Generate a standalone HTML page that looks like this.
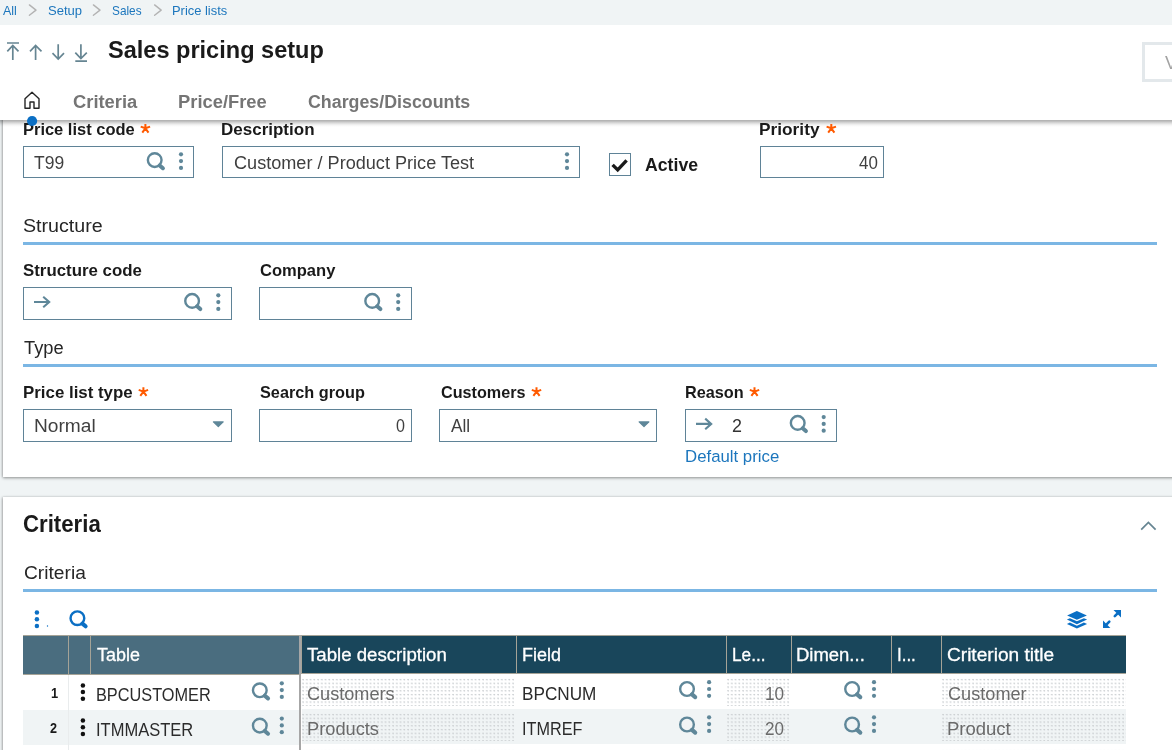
<!DOCTYPE html>
<html>
<head>
<meta charset="utf-8">
<title>Sales pricing setup</title>
<style>
*{box-sizing:border-box;margin:0;padding:0}
html,body{width:1172px;height:750px;overflow:hidden}
body{background:#f0f4f5;font-family:"Liberation Sans",sans-serif;position:relative;color:#1a1a1a}
.abs{position:absolute}
.t{position:absolute;white-space:pre;line-height:1;transform-origin:0 0}
.panel{position:absolute;background:#fff;box-shadow:0 1px 3px rgba(0,0,0,.38),-1px 0 2px rgba(0,0,0,.12)}
.line{position:absolute;height:3px;background:#7bb6e4}
.box{position:absolute;height:32px;border:1px solid #5f8397;background:#fff}
svg{position:absolute;overflow:visible}
.th{position:absolute;background:#19465b;border-left:1px solid #a5a397}
.th.fz{background:#4a6d7f}
.dot{position:absolute;height:28px;background-image:radial-gradient(circle at 1.1px 1.6px,#c9cdd0 .55px,transparent 1.05px);background-size:3.75px 3.75px}
</style>
</head>
<body>
<!-- panels -->
<div class="panel" style="left:3px;top:100px;width:1180px;height:376.8px"></div>
<div class="panel" style="left:3px;top:497.2px;width:1180px;height:300px"></div>

<!-- breadcrumb + header -->
<div class="abs" style="left:0;top:0;width:1172px;height:25px;background:#f0f4f5"></div>
<div class="abs" style="left:0;top:25px;width:1172px;height:95px;background:#fff"></div>
<div class="abs" style="left:0;top:120px;width:1172px;height:7px;background:linear-gradient(to bottom,rgba(0,0,0,.31) 0,rgba(0,0,0,.28) 1px,rgba(0,0,0,.14) 3px,rgba(0,0,0,.045) 5px,rgba(0,0,0,0) 7px)"></div>
<div class="abs" style="left:1142px;top:42px;width:40px;height:40px;border:3px solid #e3e8eb;background:#fff"></div>

<!-- form boxes -->
<div class="box" style="left:23px;top:146px;width:171px"></div>
<div class="box" style="left:222px;top:146px;width:358px"></div>
<div class="abs" style="left:609px;top:153px;width:22px;height:23px;border:1px solid #5f8397;background:#fff"></div>
<div class="box" style="left:760px;top:146px;width:124px"></div>
<div class="line" style="left:23px;top:242px;width:1134px"></div>
<div class="box" style="left:23px;top:287px;width:209px;height:33px"></div>
<div class="box" style="left:259px;top:287px;width:153px;height:33px"></div>
<div class="line" style="left:23px;top:364px;width:1134px"></div>
<div class="box" style="left:23px;top:409px;width:209px;height:33px"></div>
<div class="box" style="left:259px;top:409px;width:153px;height:33px"></div>
<div class="box" style="left:439px;top:409px;width:218px;height:33px"></div>
<div class="box" style="left:685px;top:409px;width:152px;height:33px"></div>
<div class="line" style="left:23px;top:589px;width:1134px"></div>

<!-- table backgrounds -->
<div class="abs" style="left:23px;top:710.1px;width:275.6px;height:34.8px;background:#f0f4f5"></div>
<div class="abs" style="left:301.6px;top:709.2px;width:824.2px;height:34.6px;background:#f0f4f5"></div>
<div class="abs" style="left:68px;top:674px;width:1px;height:80px;background:#e9eced"></div>
<div class="abs" style="left:23px;top:635.2px;width:275.7px;height:39.4px;background:#a5a397"></div>
<div class="abs" style="left:301.1px;top:635.2px;width:824.7px;height:38.7px;background:#a5a397"></div>
<div class="th fz" style="left:23px;top:636.2px;width:45px;height:37.4px;border-left:0"></div>
<div class="th fz" style="left:68px;top:636.2px;width:22.3px;height:37.4px"></div>
<div class="th fz" style="left:90.3px;top:636.2px;width:208.4px;height:37.4px"></div>
<div class="th" style="left:302px;top:636.2px;width:214px;height:36.6px;border-left:0"></div>
<div class="th" style="left:516px;top:636.2px;width:210px;height:36.6px"></div>
<div class="th" style="left:726px;top:636.2px;width:65px;height:36.6px"></div>
<div class="th" style="left:791px;top:636.2px;width:100px;height:36.6px"></div>
<div class="th" style="left:891px;top:636.2px;width:50px;height:36.6px"></div>
<div class="th" style="left:941px;top:636.2px;width:184.8px;height:36.6px"></div>
<div class="abs" style="left:299.2px;top:635.2px;width:2px;height:120px;background:#a6a6a6"></div>
<div class="dot" style="left:302px;top:677.7px;width:211.6px"></div>
<div class="dot" style="left:302px;top:713.3px;width:211.6px"></div>
<div class="dot" style="left:302px;top:748.9px;width:211.6px"></div>
<div class="dot" style="left:727px;top:677.7px;width:61.6px"></div>
<div class="dot" style="left:727px;top:713.3px;width:61.6px"></div>
<div class="dot" style="left:727px;top:748.9px;width:61.6px"></div>
<div class="dot" style="left:942px;top:677.7px;width:183.8px"></div>
<div class="dot" style="left:942px;top:713.3px;width:183.8px"></div>
<div class="dot" style="left:942px;top:748.9px;width:183.8px"></div>

<!-- text -->
<div class="abs" style="left:0;top:0;width:1172px;height:750px;will-change:transform">
<span class="t" style="left:3.00px;top:4px;font-size:13px;font-weight:400;color:#1c76bd;transform:scaleX(0.9616)">All</span>
<span class="t" style="left:47.70px;top:4px;font-size:13px;font-weight:400;color:#1c76bd;transform:scaleX(1.0017)">Setup</span>
<span class="t" style="left:112.00px;top:4px;font-size:13px;font-weight:400;color:#1c76bd;transform:scaleX(0.9086)">Sales</span>
<span class="t" style="left:172.01px;top:4px;font-size:13px;font-weight:400;color:#1c76bd;transform:scaleX(0.9924)">Price lists</span>
<span class="t" style="left:108.20px;top:38px;font-size:24.3px;font-weight:700;color:#1a1a1a;transform:scaleX(0.9687)">Sales pricing setup</span>
<span class="t" style="left:72.90px;top:94px;font-size:17.5px;font-weight:700;color:#757575;transform:scaleX(1.0480)">Criteria</span>
<span class="t" style="left:177.65px;top:94px;font-size:17.5px;font-weight:700;color:#757575;transform:scaleX(1.0488)">Price/Free</span>
<span class="t" style="left:307.50px;top:94px;font-size:17.5px;font-weight:700;color:#757575;transform:scaleX(1.0172)">Charges/Discounts</span>
<span class="t" style="left:1164.70px;top:55px;font-size:17.5px;font-weight:400;color:#a3a3a3;transform:scaleX(1.0400)">V</span>
<span class="t" style="left:22.89px;top:121px;font-size:16.25px;font-weight:700;color:#1a1a1a;transform:scaleX(1.0133)">Price list code</span>
<span class="t" style="left:221.45px;top:121px;font-size:16.25px;font-weight:700;color:#1a1a1a;transform:scaleX(1.0461)">Description</span>
<span class="t" style="left:759.44px;top:121px;font-size:16.25px;font-weight:700;color:#1a1a1a;transform:scaleX(1.0635)">Priority</span>
<span class="t" style="left:34.30px;top:155px;font-size:17.5px;font-weight:400;color:#3f3f3f;transform:scaleX(0.9992)">T99</span>
<span class="t" style="left:234.00px;top:155px;font-size:17.5px;font-weight:400;color:#3f3f3f;transform:scaleX(1.0345)">Customer / Product Price Test</span>
<span class="t" style="left:858.50px;top:155px;font-size:17.5px;font-weight:400;color:#3f3f3f;transform:scaleX(0.9679)">40</span>
<span class="t" style="left:644.70px;top:157px;font-size:17.5px;font-weight:700;color:#1a1a1a;transform:scaleX(1.0096)">Active</span>
<span class="t" style="left:23.30px;top:218px;font-size:17.5px;font-weight:400;color:#262626;transform:scaleX(1.1229)">Structure</span>
<span class="t" style="left:23.30px;top:262px;font-size:16.25px;font-weight:700;color:#1a1a1a;transform:scaleX(1.0363)">Structure code</span>
<span class="t" style="left:259.90px;top:262px;font-size:16.25px;font-weight:700;color:#1a1a1a;transform:scaleX(1.0176)">Company</span>
<span class="t" style="left:23.90px;top:340px;font-size:17.5px;font-weight:400;color:#262626;transform:scaleX(1.0455)">Type</span>
<span class="t" style="left:22.86px;top:384px;font-size:16.25px;font-weight:700;color:#1a1a1a;transform:scaleX(1.0379)">Price list type</span>
<span class="t" style="left:260.00px;top:384px;font-size:16.25px;font-weight:700;color:#1a1a1a;transform:scaleX(1.0008)">Search group</span>
<span class="t" style="left:440.70px;top:384px;font-size:16.25px;font-weight:700;color:#1a1a1a;transform:scaleX(0.9959)">Customers</span>
<span class="t" style="left:684.90px;top:384px;font-size:16.25px;font-weight:700;color:#1a1a1a;transform:scaleX(1.0005)">Reason</span>
<span class="t" style="left:33.91px;top:418px;font-size:17.5px;font-weight:400;color:#3f3f3f;transform:scaleX(1.0934)">Normal</span>
<span class="t" style="left:395.90px;top:418px;font-size:17.5px;font-weight:400;color:#3f3f3f;transform:scaleX(0.9200)">0</span>
<span class="t" style="left:450.90px;top:418px;font-size:17.5px;font-weight:400;color:#3f3f3f;transform:scaleX(0.9860)">All</span>
<span class="t" style="left:731.50px;top:418px;font-size:17.5px;font-weight:400;color:#333;transform:scaleX(1.0222)">2</span>
<span class="t" style="left:684.77px;top:448px;font-size:16.25px;font-weight:400;color:#1c76bd;transform:scaleX(1.0334)">Default price</span>
<span class="t" style="left:23.30px;top:513px;font-size:23.6px;font-weight:700;color:#1a1a1a;transform:scaleX(0.9414)">Criteria</span>
<span class="t" style="left:23.50px;top:565px;font-size:17.5px;font-weight:400;color:#262626;transform:scaleX(1.0959)">Criteria</span>
<span class="t" style="left:96.90px;top:647px;font-size:17.5px;font-weight:400;color:#fff;transform:scaleX(1.0242);-webkit-text-stroke:.3px #fff;">Table</span>
<span class="t" style="left:307.00px;top:647px;font-size:17.5px;font-weight:400;color:#fff;transform:scaleX(1.0644);-webkit-text-stroke:.3px #fff;">Table description</span>
<span class="t" style="left:521.77px;top:647px;font-size:17.5px;font-weight:400;color:#fff;transform:scaleX(1.0277);-webkit-text-stroke:.3px #fff;">Field</span>
<span class="t" style="left:731.72px;top:647px;font-size:17.5px;font-weight:400;color:#fff;transform:scaleX(0.9848);-webkit-text-stroke:.3px #fff;">Le...</span>
<span class="t" style="left:796.34px;top:647px;font-size:17.5px;font-weight:400;color:#fff;transform:scaleX(1.0554);-webkit-text-stroke:.3px #fff;">Dimen...</span>
<span class="t" style="left:897.03px;top:647px;font-size:17.5px;font-weight:400;color:#fff;transform:scaleX(0.9667);-webkit-text-stroke:.3px #fff;">I...</span>
<span class="t" style="left:947.40px;top:647px;font-size:17.5px;font-weight:400;color:#fff;transform:scaleX(1.0904);-webkit-text-stroke:.3px #fff;">Criterion title</span>
<span class="t" style="left:51.20px;top:686px;font-size:14px;font-weight:700;color:#1a1a1a;transform:scaleX(0.9200)">1</span>
<span class="t" style="left:50.40px;top:721px;font-size:14px;font-weight:700;color:#1a1a1a;transform:scaleX(0.9000)">2</span>
<span class="t" style="left:96.27px;top:687px;font-size:17.5px;font-weight:400;color:#2b2b2b;transform:scaleX(0.9315)">BPCUSTOMER</span>
<span class="t" style="left:96.26px;top:722px;font-size:17.5px;font-weight:400;color:#2b2b2b;transform:scaleX(0.9437)">ITMMASTER</span>
<span class="t" style="left:307.00px;top:686px;font-size:17.5px;font-weight:400;color:#6a6a6a;transform:scaleX(1.0359)">Customers</span>
<span class="t" style="left:306.76px;top:721px;font-size:17.5px;font-weight:400;color:#6a6a6a;transform:scaleX(1.0423)">Products</span>
<span class="t" style="left:522.22px;top:686px;font-size:17.5px;font-weight:400;color:#2b2b2b;transform:scaleX(0.9804)">BPCNUM</span>
<span class="t" style="left:522.27px;top:721px;font-size:17.5px;font-weight:400;color:#2b2b2b;transform:scaleX(0.9269)">ITMREF</span>
<span class="t" style="left:765.22px;top:686px;font-size:17.5px;font-weight:400;color:#6a6a6a;transform:scaleX(0.9822)">10</span>
<span class="t" style="left:765.40px;top:721px;font-size:17.5px;font-weight:400;color:#6a6a6a;transform:scaleX(0.9730)">20</span>
<span class="t" style="left:947.60px;top:686px;font-size:17.5px;font-weight:400;color:#6a6a6a;transform:scaleX(1.0365)">Customer</span>
<span class="t" style="left:946.84px;top:721px;font-size:17.5px;font-weight:400;color:#6a6a6a;transform:scaleX(1.0564)">Product</span>
</div>

<!-- icons -->
<svg style="left:0;top:0" width="1172" height="750">
  <defs>
    <g id="sr" fill="none" stroke="currentColor" stroke-linecap="round"><circle cx="0" cy="0" r="6.85" stroke-width="2.4"/><path d="M5 5.4L8.2 8.1" stroke-width="4.1"/></g>
    <g id="d3" fill="currentColor" stroke="none"><circle cx="0" cy="-6.8" r="2.1"/><circle cx="0" cy="0" r="2.1"/><circle cx="0" cy="6.8" r="2.1"/></g>
    <g id="d3b" fill="currentColor" stroke="none"><circle cx="0" cy="-6.7" r="2.25"/><circle cx="0" cy="0" r="2.25"/><circle cx="0" cy="6.7" r="2.25"/></g>
    <g id="ar" fill="none" stroke="currentColor" stroke-width="2.1"><path d="M0 0H15M9.2 -5.3L15.2 0L9.2 5.3"/></g>
    <path id="as" fill="none" stroke="#ff5a00" stroke-width="2" d="M0 .3V-4.4M0 0L-4.7 -1.7M0 0L4.7 -1.7M0 0L-3.1 4.3M0 0L3.1 4.3"/>
    <path id="tri" fill="currentColor" stroke="currentColor" stroke-width="1.2" stroke-linejoin="round" d="M0.6 0.6H10.4L5.5 5.2Z"/>
  </defs>
  <!-- breadcrumb chevrons -->
  <g fill="none" stroke="#b3b3b3" stroke-width="1.4" stroke-linecap="round" stroke-linejoin="round">
    <path d="M29.4 4.9L36 10.1L29.4 15.3"/><path d="M93.4 4.9L100 10.1L93.4 15.3"/><path d="M154.6 4.9L161.2 10.1L154.6 15.3"/>
  </g>
  <!-- nav arrows -->
  <g fill="none" stroke="#668592" stroke-width="1.7">
    <path d="M7 43h12M12.8 60V45.5M7.3 51.3L12.8 45.5L18.5 51.3"/>
    <path d="M35.6 60V45.5M30 51.3L35.6 45.5L41.5 51.3"/>
    <path d="M58.2 44.3V59M52.5 53.2L58.2 59L64 53.2"/>
    <path d="M80.9 44.3V58.5M75.3 52.7L80.9 58.5L86.8 52.7M75.3 61.2h11.7"/>
  </g>
  <!-- home -->
  <path fill="none" stroke="#262626" stroke-width="1.4" stroke-linejoin="round" d="M25 98.8L32 92.2L39 98.8V108.2H34V102H30V108.2H25Z"/>
  <circle cx="32.1" cy="121" r="5.1" fill="#0b6fc4"/>
  <!-- checkbox tick -->
  <path fill="none" stroke="#1a1a1a" stroke-width="3.4" d="M612.6 164.9L617.7 169.9L626.6 160.4"/>
  <!-- asterisks -->
  <use href="#as" x="145.4" y="128.3"/><use href="#as" x="831.3" y="128.3"/><use href="#as" x="143.4" y="391.6"/><use href="#as" x="536.5" y="391.6"/><use href="#as" x="754.5" y="391.6"/>
  <!-- field icons -->
  <g color="#5f8799">
    <use href="#sr" x="154.7" y="160.1"/><use href="#d3" x="181" y="161.1"/>
    <use href="#d3" x="567" y="161.1"/>
    <use href="#ar" x="34" y="302"/><use href="#sr" x="192.1" y="300.9"/><use href="#d3" x="218.3" y="302.1"/>
    <use href="#sr" x="372.2" y="300.9"/><use href="#d3" x="398.2" y="302.1"/>
    <use href="#tri" x="212.8" y="421.3"/>
    <use href="#tri" x="638.5" y="421.3"/>
    <use href="#ar" x="696" y="423.9"/><use href="#sr" x="797.7" y="422.9"/><use href="#d3" x="823.7" y="423.9"/>
  </g>
  <!-- collapse chevron -->
  <path fill="none" stroke="#668592" stroke-width="1.7" d="M1141.2 529.6L1148.4 522.4L1155.6 529.6"/>
  <!-- toolbar -->
  <g color="#0b6fc4">
    <use href="#d3b" x="36.9" y="619.2"/><circle cx="47.5" cy="626" r="0.7" fill="currentColor"/><use href="#sr" x="77.4" y="618.2"/>
    <g fill="currentColor">
      <path d="M1076.9 611.1L1086.9 615.4L1076.9 619.8L1067.1 615.4Z"/><path d="M1066.9 619.6L1069.9 618.2L1076.9 621.3L1083.9 618.2L1087.1 619.6L1076.9 624.2Z"/><path d="M1066.9 624L1069.9 622.6L1076.9 625.7L1083.9 622.6L1087.1 624L1076.9 628.6Z"/>
      <path d="M1113.5 609.9H1121V617.4Z"/><path d="M1103 620.6V628H1110.4Z"/>
      <path d="M1117.6 613.3L1114.8 616.1M1106.4 624.6L1109.3 621.7" fill="none" stroke="currentColor" stroke-width="2.6" stroke-linecap="round"/>
    </g>
  </g>
  <!-- row handles -->
  <g color="#111"><use href="#d3b" x="82.9" y="692.1"/><use href="#d3b" x="82.9" y="727.2"/></g>
  <!-- cell icons -->
  <g color="#5f8799">
    <use href="#sr" x="259.8" y="690.3"/><use href="#d3" x="281.8" y="690.1"/>
    <use href="#sr" x="259.8" y="725.6"/><use href="#d3" x="281.8" y="725.4"/>
    <use href="#sr" x="687" y="689"/><use href="#d3" x="709.1" y="689"/>
    <use href="#sr" x="687" y="724.5"/><use href="#d3" x="709.1" y="724.1"/>
    <use href="#sr" x="852.1" y="689"/><use href="#d3" x="874" y="689"/>
    <use href="#sr" x="852.1" y="724.5"/><use href="#d3" x="874" y="724.1"/>
  </g>
</svg>
</body>
</html>
